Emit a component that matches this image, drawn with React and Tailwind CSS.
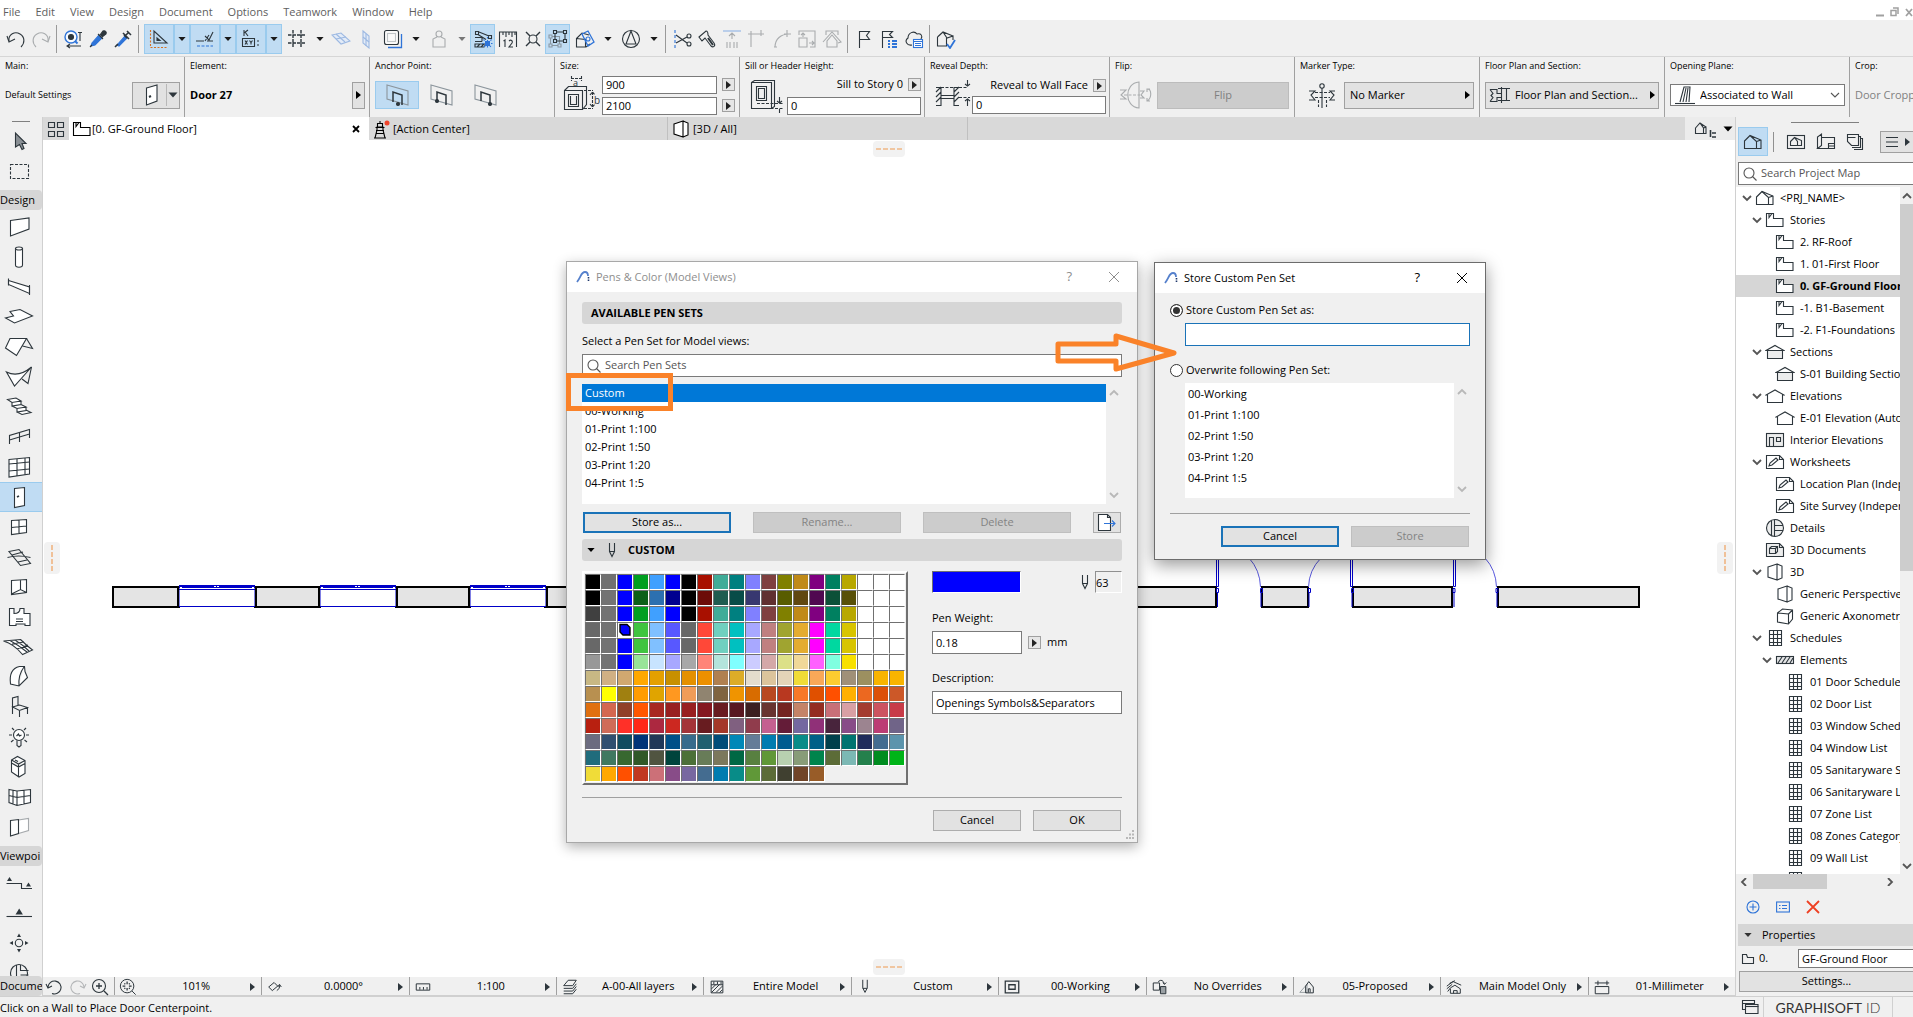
import React, { useState } from 'react';

const Svg = ({ w = 20, h = 20, className = '', children }) => (
  <svg
    width={w}
    height={h}
    viewBox={`0 0 ${w} ${h}`}
    fill="none"
    stroke="currentColor"
    strokeWidth="1.1"
    className={`shrink-0 ${className}`}
    aria-hidden="true"
  >
    {children}
  </svg>
);

const BLUE = '#2f74d8';

/* small shared glyphs */
const Down = ({ className = '' }) => (
  <Svg w={10} h={6} className={className}><path d="M0.5 0.5h9L5 5.5z" fill="currentColor" stroke="none" /></Svg>
);
const Right = ({ className = '' }) => (
  <Svg w={5} h={8} className={className}><path d="M0 0l5 4-5 4z" fill="currentColor" stroke="none" /></Svg>
);
const Chevron = ({ dir = 'down', className = '' }) => {
  const paths = { down: 'M1 2l4 4 4-4', up: 'M1 6l4-4 4 4', left: 'M7 0L3 4l4 4', right: 'M3 0l4 4-4 4' };
  return <Svg w={10} h={8} className={className}><path d={paths[dir]} strokeWidth="1.8" /></Svg>;
};
const Lens = ({ className = '' }) => (
  <Svg w={14} h={14} className={className}><circle cx="6" cy="6" r="5" /><path d="M9.5 9.5l4 4" /></Svg>
);
const Pen = () => (
  <Svg w={8} h={16} className="text-[#2d363c]"><path d="M1.5 1v8.5l2.5 5 2.5-5V1M1.5 9.500h5" /></Svg>
);

/* top toolbar */
const top = {
  undo: <><path d="M3 12C2 5 9 2 14 5s5 9 1 13" /><path d="M1 7l2 6 6-3" /></>,
  redo: <><path d="M17 12C18 5 11 2 6 5s-5 9-1 13" /><path d="M19 7l-2 6-6-3" /></>,
  find: <><circle cx="8" cy="8" r="6" stroke={BLUE} strokeWidth="1.4" fill="#f7fafe" /><circle cx="8" cy="8" r="2.5" fill="#2d363c" /><path d="M12 12l2.500 2.500" stroke={BLUE} strokeWidth="2" /><path d="M15 3.500h4M17 3v9M5 17h13M7 15l-3 2 3 2" /></>,
  pick: <><path d="M3 17l1-3 7-8 3 3-7 7z" fill={BLUE} stroke={BLUE} /><path d="M10 5l5 5M12 6l3-4c2-1 4 1 3 3l-4 3" fill="#2d363c" /><path d="M2 18l2-2" /></>,
  inject: <><path d="M4 16l8-9 2 2-8 8z" fill={BLUE} stroke={BLUE} /><path d="M10 4l6 6M12 7l4-4M14 2l4 4M11 6l3 3M2 18l3-3" strokeWidth="1.6" /></>,
  guide: <><path d="M5 2v12h13z" /><path d="M8 9v2.500h3z" /><path d="M1.500 1v17.500H19" stroke="#d87020" strokeDasharray="2 1.5" /></>,
  snap: <><path d="M1 12h8M12 12h6M10 7l4 4 4-8M10 12l4-6" /><path d="M2 17h16" stroke={BLUE} strokeDasharray="3 1.5" /></>,
  coord: <><path d="M3 1v6M3 4l4-3M4 3l3 4M1.500 9.500h12v8h-12z" /><path d="M4 11.500l2.500 4M6.500 11.500l-2.500 4M8.500 11.500l1.500 2 1.500-2M10 13.500v2M16 12h2M16 16h2" /></>,
  grid: <path d="M6 1v18M14 1v18M1 6h18M1 14h18" strokeWidth="1.4" strokeDasharray="3.5 1" />,
  planeH: <><path d="M1 6l9-2 9 8-9 3z" fill="#e3ebf7" stroke="#9db9e2" /><path d="M5 5l9 8M5 10l10-2" stroke="#9db9e2" /></>,
  planeV: <><path d="M7 2l6 5v12l-6-5z" fill="#e3ebf7" stroke="#9db9e2" /><path d="M10 5v12M7 8l6 5" stroke="#9db9e2" /></>,
  copy: <><path d="M5 18.500h13.500V5" stroke={BLUE} strokeWidth="1.3" /><rect x="1.5" y="1.5" width="14" height="14" rx="2" fill="#fafafa" /><rect x="4.5" y="4.5" width="8" height="8" stroke="#c0c5c8" /></>,
  weight: <><circle cx="10" cy="5" r="3" /><path d="M8 8l-4 2v8h12v-8l-4-2" /></>,
  trace: <><path d="M2.500 2.500h3v3h-3zM15.500 6.500h3v3h-3zM6 3l10 4M5 5.500l8 5M2 8.500h7M2 12.500h7M9 8.500v4M2 18h9l2-3H2zM4 18l3-3M8 18l3-3" /><rect x="12" y="12" width="5" height="5" fill={BLUE} stroke="none" /><path d="M14.500 8v12M9 14.500h11M10.500 10.500l8 8M18.500 10.500l-8 8" stroke={BLUE} strokeDasharray="1.5 1.5" /></>,
  ruler: <><path d="M1.500 18V3h17v15M5 3v3M8 3v5M11 3v3M14 3v5M17 3v3" /><path d="M5.500 12l1.500-1v7M11 12c2-2 4 0 3 2l-3 4h4" /></>,
  cross: <><circle cx="10" cy="10" r="4" /><path d="M3 3l4 4M17 3l-4 4M3 17l4-4M17 17l-4-4" strokeWidth="1.4" /></>,
  group: <><path d="M2.500 7.500h9v9h-9z" stroke="#8a98a3" /><path d="M1 6h3v3H1zM1 15h3v3H1zM10 15h3v3h-3z" stroke="#8a98a3" fill="#c0dcf3" /><path d="M7 3h10v9H7z" /><path d="M5.500 1.500h3v3h-3zM15.500 1.500h3v3h-3zM5.500 10.500h3v3h-3zM15.500 10.500h3v3h-3z" fill="#c0dcf3" /></>,
  box: <><path d="M1.500 9.500L7 4l7 2M1.500 9.500V18h9V10.500zM11 18l4-3" /><path d="M7 5l6-3 6 11-6 4z" stroke={BLUE} strokeWidth="1.3" /><circle cx="13" cy="10" r="2" stroke={BLUE} /></>,
  north: <><circle cx="10" cy="10" r="8.5" /><path d="M10 2L5 15h10z" /></>,
  scissors: <><path d="M3 1v18" stroke={BLUE} strokeDasharray="3 2" /><path d="M4 6l11 8M4 14l11-6" /><circle cx="17" cy="7" r="2" /><circle cx="17" cy="15" r="2" /></>,
  axe: <><path d="M2 8l7-6c2 0 2 2 2 4l6 8c2 3-1 5-3 3L8 9l-3 3z" /><path d="M11 9l5 7" strokeWidth="2" /></>,
  adjust: <><path d="M1 2h18" stroke="#8fb2e6" /><path d="M10 10V4M7 7l3-3 3 3M5 19v-6M8 19v-6M12 19v-6M15 19v-6" /></>,
  corner: <path d="M4 18V5h13M1 5h6M14 1v6M4 2v6" />,
  fillet: <path d="M3 18C3 10 9 5 17 5M12 5h7M15 1v7M2 18h3" />,
  resize: <path d="M2 9h8v9H2zM2 6V2h16v16h-5M6 8V4M4 6l2-2 2 2M12 14h5M15 12l2 2-2 2" />,
  house: <><path d="M4 6V2h12v4" /><path d="M5 18v-6l5-6 5 6v6zM1 13l9-10 9 10-3 1" /></>,
  flag: <path d="M5.500 19V2.500h10l-3 4 3 4h-10" />,
  flagList: <><path d="M3.500 19V2.500h10l-3 3 3 3h-10" /><path d="M9 12h2M9 15h2M9 18h2M13 12h5M13 15h5M13 18h5" stroke={BLUE} strokeWidth="1.8" /></>,
  cloud: <><path d="M8 16c-5 1-8-4-4-7 0-5 6-8 9-4 4-1 6 2 4 5" /><rect x="9.5" y="10.5" width="9" height="8" fill="#fff" stroke={BLUE} /><path d="M9 12.500h10M11 14.500h6M11 16.500h6" stroke={BLUE} /></>,
  check: <><path d="M1.500 8L7 3l10 4M1.500 8v9h9V9M7 3l4 6 6-2v4" /><path d="M11 15l3 4 5-8" stroke={BLUE} strokeWidth="1.8" /></>,
};

/* toolbox, each drawn in a 38x30 box */
const tools = [
  ['Wall', <path d="M10.500 8.500L29 6v11l-18.500 7z" fill="#fff" />],
  ['Column', <><path d="M15.500 6v17c0 3 7 3 7 0V6" fill="#fff" /><ellipse cx="19" cy="6.5" rx="3.5" ry="1.5" fill="#fff" /></>],
  ['Beam', <><path d="M8.500 8.500l21 6.500v6.500l-21-9z" fill="#fff" /><path d="M8.500 6.500v7M29.500 13v10" /></>],
  ['Slab', <path d="M10 9.500l10-2 12.500 6.500-18 7-9-5 8-2z" fill="#fff" />],
  ['Roof', <><path d="M10 6.500h16.500l-10 17-11-7.500z" fill="#fff" /><path d="M26.500 6.500l6 10-10-2.500" /></>],
  ['Shell', <><path d="M6.500 10q12 6 25-5L14.500 24z" fill="#fff" /><path d="M31.500 5L28 21.500 22 17" /></>],
  ['Stair', <path d="M7.500 7.500L16 6l5 3-9 1.500zM12 10.500v3.500l9-1.500V9M12 14l5 2.500 9-1.500-5-2.500M17 16.500V20l9-1.500V15M17 20l5 2.500 9-2-5-2.500" fill="#fff" />],
  ['Railing', <path d="M9.500 22V13.500l20-6V16M19.500 10.500V20M9.500 18l20-6" />],
  ['Curtain Wall', <><path d="M9 7.500l20.500-2v16.500L9 25z" fill="#fff" /><path d="M9 12l20.500-2M9 19l20.500-2M17 7v17M25 6v16.500" /></>],
  ['Door', <><path d="M14.500 6.500l10-1v18l-10 2z" fill="#fff" /><path d="M17 15l2-1" strokeWidth="1.8" /></>],
  ['Window', <path d="M11.500 8.500l15-1v13l-15 2zM19 8v13.500M11.500 15.500l15-1.500" fill="#fff" />],
  ['Skylight', <path d="M9 9.500l10-2 11.500 14-10 2zM7.500 15.500q11-3 23 0M12 13l11-3M18 20l9-2" />],
  ['Opening', <path d="M11.500 8.500l15-1v13l-15 2zM20.500 8v9.500M11.500 22l9-4.500 6 3" fill="#fff" />],
  ['Zone', <><path d="M9.500 6.500h4.500v5q6 0 6-5h4v5h6v12h-5V22h-9v1.500H9.500z" fill="#fff" /><path d="M16 17h7M16 19.500h7" /></>],
  ['Mesh', <path d="M3.500 9l17-1.500q6 6 12 10.500l-10 4.500Q14 12 3.500 9zM10 8.500q9 5 17 11.500M15 8q8 5 14 11M12 12l12-2M17 17l11-4" fill="#fff" />],
  ['Morph', <path d="M10.500 22q-2-15 9-17.500h5l.5 5 2.500 6-8.500 8.500zM24 5q-6 8-5 19" fill="#fff" />],
  ['Object', <path d="M12.500 15V6l5.500-1.500V13M12.500 15l7-2 8 2.500-8 3zM12.500 15v7M19.500 18v7M27.500 15.500V22" />],
  ['Lamp', <><circle cx="19" cy="13" r="5.5" fill="#fff" /><path d="M17 18.500v5l2 1.500 2-1.500v-5M16.500 14l2-2 1 2 2-1M9 13h3M26 13h3M12 6l2 2M26 6l-2 2M11 20l2.500-2M27 20l-2.500-2" /></>],
  ['Equipment', <path d="M11.500 8l6-3.500 7.500 4v13L19 25l-7.500-5zM11.500 8l7 4 6.500-3.500M18.500 12v13M11.500 11l7 4 6.500-3.500M15 8l3 1.500" fill="#fff" />],
  ['Wall Panel', <path d="M9 7.500l8 1.500 13.500-1.500v13L17 23.500 9 20.500zM17 9v14.500M9 13.500l8 2 13.500-2M13 8v14M24 8v14" fill="#fff" />],
  ['Wall End', <><path d="M18.500 8l10-1.500v12l-10 3" fill="#fff" stroke="#a5a9ac" /><path d="M10.500 8.500l8-1v14l-8 2.500z" fill="#fff" /></>],
];
const viewTools = [
  ['Section', <><path d="M6.500 15.500h15v5h10.500" /><path d="M7 13l2.500-4 2.500 4zM26 18.500l2.500-4 2.500 4z" fill="currentColor" stroke="none" /></>],
  ['Elevation', <><path d="M6.500 18.500H32" /><path d="M15.500 16.500l3.700-6 3.700 6z" fill="currentColor" stroke="none" /></>],
  ['Interior Elevation', <><circle cx="19" cy="15" r="3.7" /><path d="M17 9l2-3.500L21 9zM17 21l2 3.500 2-3.500zM13 13l-3.500 2 3.500 2zM25 13l3.500 2-3.500 2z" fill="currentColor" stroke="none" /></>],
  ['Detail', <><circle cx="19" cy="15" r="8.5" /><path d="M16.500 7v17M20.500 7v5.500h8M20.500 17h8" /></>],
];

/* navigator tree icons, 20x20 */
const tree = {
  project: <><path d="M1.500 9L7 3.500 18 8v8.500H1.500z" fill="#fff" /><path d="M7 3.500l6.500 6v7M13.500 9.500L18 8" /></>,
  story: <><path d="M1.500 3.500h7v5h9.500v8H1.500z" fill="#fff" /><path d="M4 3.500v4l3-4" /></>,
  section: <><path d="M2.500 8.500h15v8h-15z" fill="#eceded" /><path d="M1 8.500l9-5 9 5z" fill="#fff" /></>,
  elevation: <path d="M2.500 16.500V9L1 9l9-5 9 5h-1.500v7.500z" fill="#fff" />,
  interior: <><rect x="1.5" y="3.5" width="17" height="13" fill="#eceded" /><path d="M4.500 16V7.500h4V16M11.500 7.500h4v4h-4z" /></>,
  sheet: <><path d="M1.500 3.500h13l4 4v9h-17z" fill="#fff" /><path d="M14.500 3.500v4h4M4 14l1-3 6-5 2 2-6 5z" /></>,
  detail: <><circle cx="10" cy="10" r="8.5" fill="#eceded" /><path d="M6.500 2.500v15M9.500 2v16M9.500 7.500h8.500M9.500 12.500h8.500" /></>,
  doc3d: <><path d="M1.500 3.500h13l4 4v9h-17z" fill="#eceded" /><path d="M14.500 3.500v4h4M4.500 8.500h6v5h-6zM4.500 8.500l2-2h6v5l-2 2M10.500 8.500l2-2" /></>,
  persp: <path d="M3 5l9-3v16l-9-3zM12 2l5 2v12l-5 2" fill="#fff" />,
  axon: <path d="M2.500 7l5-4 10 1v9l-4 5-11-2zM2.500 7l11 1v10M13.500 8l4-4" fill="#fff" />,
  table: <path d="M4.500 2.500h12v15h-12zM4.500 6.500h12M4.500 10.500h12M4.500 14.500h12M8.500 2.500v15M12.500 2.500v15" fill="#fff" />,
  elements: <><rect x="1.5" y="6.5" width="17" height="7" fill="#e4e5e6" /><path d="M3 13l4-6M7 13l4-6M11 13l4-6M15 13l3-5" /></>,
};

const nodes = [
  [0, 'project', '<PRJ_NAME>', true],
  [1, 'story', 'Stories', true],
  [2, 'story', '2. RF-Roof'],
  [2, 'story', '1. 01-First Floor'],
  [2, 'story', '0. GF-Ground Floor'],
  [2, 'story', '-1. B1-Basement'],
  [2, 'story', '-2. F1-Foundations'],
  [1, 'section', 'Sections', true],
  [2, 'section', 'S-01 Building Section'],
  [1, 'elevation', 'Elevations', true],
  [2, 'elevation', 'E-01 Elevation (Auto)'],
  [1, 'interior', 'Interior Elevations'],
  [1, 'sheet', 'Worksheets', true],
  [2, 'sheet', 'Location Plan (Independent)'],
  [2, 'sheet', 'Site Survey (Independent)'],
  [1, 'detail', 'Details'],
  [1, 'doc3d', '3D Documents'],
  [1, 'persp', '3D', true],
  [2, 'persp', 'Generic Perspective'],
  [2, 'axon', 'Generic Axonometry'],
  [1, 'table', 'Schedules', true],
  [2, 'elements', 'Elements', true],
  [3, 'table', '01 Door Schedule'],
  [3, 'table', '02 Door List'],
  [3, 'table', '03 Window Schedule'],
  [3, 'table', '04 Window List'],
  [3, 'table', '05 Sanitaryware Schedule'],
  [3, 'table', '06 Sanitaryware List'],
  [3, 'table', '07 Zone List'],
  [3, 'table', '08 Zones Category'],
  [3, 'table', '09 Wall List'],
  [3, 'table', ''],
];
const indent = ['pl-[3px]', 'pl-[13px]', 'pl-[23px]', 'pl-[33px]'];

const penRows = [
  '000000 707070 0000ff 009f20 40a0ff 0000ff 000000 a81000 40ac98 008080 8080ff 804040 808000 c08a18 800080 008060 b8a800 ffffff ffffff ffffff',
  '000000 737373 0000ff 0c6018 2c70b0 000090 000000 6c0c08 205c50 084c48 383870 603030 585c00 604810 500850 0c5038 585008 ffffff ffffff ffffff',
  '404040 737373 0000ff 009f20 40a0ff 0000ff 000000 a81000 40ac98 008080 8080ff 804040 808000 c08a18 800080 008060 b8a800 ffffff ffffff ffffff',
  '686868 737373 0000ff 40c440 80c0ff 5858ff 686868 ff4838 70d0c0 00c0c0 a8a8ff c08080 a0a430 e4ac30 ff00ff 00d8a0 d8c400 ffffff ffffff ffffff',
  '686868 737373 0000ff 40c440 80c0ff 5858ff 686868 ff4838 70d0c0 00c0c0 a8a8ff c08080 a0a430 e4ac30 ff00ff 00d8a0 d8c400 ffffff ffffff ffffff',
  '989898 737373 0000ff 98e498 c8e4ff a8a8ff a8a8a8 ff8478 b4e4dc 80ffff ccccff d4a8a8 dce088 f0d898 ff60ff 80ffe0 f8e000 ffffff ffffff ffffff',
  'c8b884 d0b084 d0a870 ffa800 e4a000 c89000 e49000 ec9000 b08050 dcac28 e4dccc dcc49c e4d4b8 f0dc38 f8a858 fccc30 a09078 9c9060 f8b400 f8b400',
  'b89050 ffff00 a08010 ff9c00 e0a400 ff9820 f09c58 908470 806440 f09400 d86c00 b84820 b83820 f87828 e05000 ff5000 ffb000 ec6820 dc5008 cc5828',
  'e07010 d46850 904028 ff5800 a82820 982020 982020 841820 681c20 581820 3c2020 683430 742420 c48468 942c20 c87078 d8a0a4 a43c30 cc5460 c83c48',
  'b82010 d06c58 ff3028 ff2818 ac2840 cc2820 a43438 681c20 a43828 806080 903c4c c46090 641c38 7468a0 903078 48243c 884c88 9c8490 bc3c74 706488',
  '6c6c80 305070 104c60 003478 203858 005088 386c8c 206070 004c78 0088b8 647c98 007cb0 005c90 088c88 006088 00404c 007470 202c5c 446c90 5c94ac',
  '206c7c 407860 386830 305828 505440 00443c 4c7038 687c58 7c785c 006844 588040 609838 b8d0b0 889c78 00844c 5c6c38 7cb8b4 24804c 008c20 00b418',
  'f0dc38 ffa800 ff5000 c03820 cc7078 884c88 7868a0 446c90 007cb0 088c88 609838 5c6c38 404030 704428 985c28',
];
const pens = penRows.join(' ').split(' ');

const penSets = ['00-Working', '01-Print 1:100', '02-Print 1:50', '03-Print 1:20', '04-Print 1:5'];

const T = ({ icon, wide, on, dim }) => (
  <button
    aria-label={icon}
    className={`flex h-[30px] shrink-0 items-center justify-center ${wide ? 'w-[30px]' : 'w-[25px]'} ${on ? 'border border-[#9acbee] bg-[#c0dcf3]' : ''} ${dim ? 'text-[#a9acae]' : 'text-[#2d363c]'}`}
  >
    <Svg>{top[icon]}</Svg>
  </button>
);
const Drop = ({ on, dim }) => (
  <button aria-label="More" className={`flex h-[30px] w-4 shrink-0 items-center justify-center ${on ? 'border border-[#9acbee] bg-[#c0dcf3]' : ''} ${dim ? 'text-[#777]' : 'text-[#1a1a1a]'}`}>
    <Down className="w-2" />
  </button>
);
const Sep = () => <div className="mx-[3px] h-[28px] w-px shrink-0 bg-[#9a9a9a]" />;

const Toolbar = () => (
  <div className="flex h-[37px] shrink-0 items-center border-b border-[#d6d6d6] bg-[#f0f0f0] pt-px pl-[3px]">
    <T icon="undo" /><T icon="redo" dim />
    <Sep />
    <T icon="find" /><T icon="pick" /><T icon="inject" />
    <Sep />
    <div className="ml-0.5 flex">
      <T icon="guide" wide on /><Drop on />
      <T icon="snap" wide on /><Drop on />
      <T icon="coord" wide on /><Drop on />
    </div>
    <T icon="grid" wide /><Drop />
    <T icon="planeH" /><T icon="planeV" />
    <T icon="copy" wide /><Drop />
    <T icon="weight" wide dim /><Drop dim />
    <T icon="trace" on /><T icon="ruler" /><T icon="cross" /><T icon="group" on />
    <T icon="box" wide /><Drop />
    <T icon="north" wide /><Drop />
    <Sep />
    <T icon="scissors" /><T icon="axe" />
    <T icon="adjust" dim /><T icon="corner" dim /><T icon="fillet" dim /><T icon="resize" dim /><T icon="house" dim />
    <Sep />
    <T icon="flag" /><T icon="flagList" /><T icon="cloud" />
    <Sep />
    <T icon="check" />
  </div>
);

const Section = ({ label, last, children }) => (
  <div className={`flex flex-col py-0.5 ${last ? 'min-w-0 flex-1 overflow-hidden' : 'w-[185px] shrink-0 border-r border-[#a0a0a0]'}`}>
    <div className="h-4 shrink-0 pl-[5px] text-[9px] leading-[14px] text-black">{label}</div>
    <div className="flex h-10 items-center">{children}</div>
  </div>
);
const MiniBtn = () => (
  <button aria-label="Options" className="flex h-[13px] w-[13px] shrink-0 items-center justify-center border border-[#a0a0a0] bg-[#e6e6e6] text-[#222]"><Right /></button>
);
const field = 'min-w-0 border border-[#7a7a7a] bg-white pl-[3px] text-[11px] outline-none';
const anchors = [
  <><path d="M3 2l21 6v14L3 16z" stroke="#8b959c" /><path d="M9 19V9l9 3v10" strokeWidth="1.5" /><circle cx="14" cy="21" r="1.5" fill="currentColor" /></>,
  <><path d="M3 2l21 6v14L3 16z" stroke="#8b959c" /><path d="M9 18V9l9 3v10" strokeWidth="1.5" /><circle cx="9" cy="18" r="1.5" fill="currentColor" /></>,
  <><path d="M3 2l21 6v14L3 16z" stroke="#8b959c" /><path d="M9 18V9l9 3v8" strokeWidth="1.5" /><circle cx="18" cy="21" r="1.5" fill="currentColor" /></>,
];

const InfoBar = () => (
  <div className="flex h-[60px] shrink-0 overflow-hidden bg-[#f0f0f0]">
    <Section label="Main:">
      <span className="flex-1 pl-[5px] text-[9px]">Default Settings</span>
      <button aria-label="Default Settings" className="mr-1 flex h-[27px] w-[48px] items-center border border-[#a0a0a0] bg-[#e2e2e2] pl-3 text-[#2d363c]">
        <Svg w={13} h={22}><path d="M1.500 4L12 1v16L1.500 21z" fill="#fff" /><path d="M4 13l2-1" strokeWidth="2" /></Svg>
        <span className="ml-2 flex h-[22px] items-center border-l border-[#b8b8b8] pl-px"><Down /></span>
      </button>
    </Section>
    <Section label="Element:">
      <span className="flex-1 pl-[5px] text-[11px] font-bold">Door 27</span>
      <button aria-label="Choose element" className="mr-1 flex h-[27px] w-[13px] items-center justify-center border border-[#a0a0a0] bg-[#e2e2e2]"><Right /></button>
    </Section>
    <Section label="Anchor Point:">
      {anchors.map((a, i) => (
        <button key={i} aria-label={`Anchor ${i + 1}`} className={`flex h-7 w-11 items-center justify-center text-[#2d363c] ${i === 0 ? 'ml-[5px] border border-[#9acbee] bg-[#c0dcf3]' : ''}`}>
          <Svg w={27} h={25}>{a}</Svg>
        </button>
      ))}
    </Section>
    <Section label="Size:">
      <Svg w={38} h={40} className="ml-[7px] text-[#2d363c]">
        <path d="M2.500 15.500h18v19h-18zM2.500 15.500l4-4h18v18l-4 5M6.500 19.500h10v12h-10zM8.500 21v8.500h6V21" />
        <path d="M9 3.500h10M9.500 1v5M19.500 1v5M30.500 17v15M28 20l2.500-3 2.500 3M28 29l2.500 3 2.500-3M22 15.500h9M22 33.500h9" strokeDasharray="3 1" />
        <text x="11" y="11" fontSize="9" fill="currentColor" stroke="none">a</text>
        <text x="32" y="29" fontSize="10" fill="currentColor" stroke="none">b</text>
      </Svg>
      <div className="mr-1 ml-0.5 flex min-w-0 flex-1 flex-col gap-[3px]">
        <div className="flex items-center gap-[5px]"><input aria-label="Width" defaultValue="900" className={`${field} h-[18px] w-0 flex-1`} /><MiniBtn /></div>
        <div className="flex items-center gap-[5px]"><input aria-label="Height" defaultValue="2100" className={`${field} h-[18px] w-0 flex-1`} /><MiniBtn /></div>
      </div>
    </Section>
    <Section label="Sill or Header Height:">
      <Svg w={38} h={36} className="ml-[9px] text-[#2d363c]">
        <path d="M2.500 5.500h20v26h-20zM2.500 5.500l3-2h20v26l-3 2M7.500 9.500h10v14h-10zM9.500 11.500h6v10h-6z" />
        <path d="M8 26.500h26M8 31.500h26" strokeDasharray="3 1.5" /><path d="M30.500 20v6M30.500 36v-4M28 24l2.500 2 2.500-2" />
      </Svg>
      <div className="mr-[3px] flex min-w-0 flex-1 flex-col gap-[3px]">
        <div className="flex h-[18px] items-center justify-end gap-[5px] text-[11px] whitespace-nowrap">Sill to Story 0<MiniBtn /></div>
        <input aria-label="Sill height" defaultValue="0" className={`${field} h-[18px] w-full`} />
      </div>
    </Section>
    <Section label="Reveal Depth:">
      <Svg w={38} h={36} className="ml-[9px] text-[#2d363c]">
        <path d="M2 10.500h5v18H2M25 10.500h-5v18h5M7 18.500h13M7 21.500h13M2 15l5-5M2 20l5-5M2 25l5-5M20 15l5-5M20 20l5-5M20 25l5-5" />
        <path d="M7 10.500h27M25 20.500h11" strokeDasharray="3 1.5" /><path d="M33.500 3v6M33.500 29v-7M31 7l2.500 2L36 7M31 24l2.500-2 2.500 2" />
      </Svg>
      <div className="mr-[3px] flex min-w-0 flex-1 flex-col gap-px">
        <div className="flex h-[18px] items-center justify-end gap-[5px] text-[11px] whitespace-nowrap">Reveal to Wall Face<MiniBtn /></div>
        <input aria-label="Reveal depth" defaultValue="0" className={`${field} h-[18px] w-full`} />
      </div>
    </Section>
    <Section label="Flip:">
      <Svg w={34} h={30} className="ml-[9px] text-[#a9acae]">
        <path d="M20 2C5 3 5 27 20 28zM1 10h6l-5 5 5 4H1M21 11h4l-3 4 3 3h-4M28 9c5 0 5 9 0 12M31 9h-3v3M28 18v3h3" />
        <path d="M5 15h16" strokeDasharray="3 1.5" />
      </Svg>
      <button disabled className="mr-[5px] ml-1 h-[27px] flex-1 border border-[#bcbcbc] bg-[#cccccc] text-[11px] text-[#808080]">Flip</button>
    </Section>
    <Section label="Marker Type:">
      <Svg w={30} h={30} className="ml-3 text-[#2d363c]">
        <circle cx="15" cy="6" r="2.2" /><path d="M15 8v20M2 11h6l-4 4 4 5H2M28 11h-5l4 4-4 5h5" /><path d="M8 12.500h15M8 17.500h15M11.500 20v7M19.500 20v7" strokeDasharray="3 1.5" />
      </Svg>
      <button className="mr-[5px] ml-[7px] flex h-[27px] flex-1 items-center justify-between border border-[#a0a0a0] bg-[#e2e2e2] pr-[3px] pl-[5px] text-[11px]">No Marker<Right /></button>
    </Section>
    <Section label="Floor Plan and Section:">
      <button className="mr-[5px] ml-[5px] flex h-[27px] flex-1 items-center border border-[#a0a0a0] bg-[#e2e2e2] px-[3px] text-[11px]">
        <Svg w={22} h={18} className="mr-1 text-[#2d363c]"><path d="M1 3.500h7v4h5M1 15.500h7v-4h5M1 3.500l3 4-2 2 2 2-3 4M12.500 1v16M9 2.500h12M9 14.500h12M17.500 3v11" /></Svg>
        <span className="flex-1 text-left">Floor Plan and Section...</span><Right />
      </button>
    </Section>
    <Section label="Opening Plane:">
      <label className="mr-1 ml-[5px] flex h-[22px] flex-1 items-center border border-[#7a7a7a] bg-white pr-1 pl-[3px]">
        <Svg w={22} h={20} className="text-[#2d363c]"><path d="M1 18.500h20" /><path d="M6 17l4-15h6l-1 15M9 17l3-14M12 17l2-14" /></Svg>
        <select aria-label="Opening Plane" className="min-w-0 flex-1 appearance-none bg-transparent pl-1 text-[11px] outline-none"><option>Associated to Wall</option></select>
        <Svg w={10} h={8} className="text-[#555]"><path d="M1 2l4 4 4-4" /></Svg>
      </label>
    </Section>
    <Section label="Crop:" last>
      <span className="pl-[5px] text-[11px] whitespace-nowrap text-[#808080]">Door Cropping</span>
    </Section>
  </div>
);

const Tool = ({ name, on, onClick, children }) => (
  <button aria-label={name} onClick={onClick} className={`flex h-[30px] w-full shrink-0 items-center text-[#2d363c] ${on ? 'border-y border-[#9acbee] bg-[#c0dcf3]' : ''}`}>
    <Svg w={38} h={30}>{children}</Svg>
  </button>
);
const ToolHead = ({ children }) => (
  <div className="h-5 shrink-0 overflow-hidden rounded-r bg-[#d6d6d6] text-[11px] leading-5 text-black">{children}</div>
);

const Toolbox = () => {
  const [active, setActive] = useState('Door');
  return (
    <aside className="flex w-[43px] shrink-0 flex-col overflow-hidden border-r border-[#d0d0d0] bg-[#f0f0f0]">
      <div className="flex min-h-0 flex-1 flex-col overflow-hidden">
        <div className="flex h-[9px] shrink-0 items-center justify-center"><div className="h-px w-[18px] bg-[#808080]" /></div>
        <Tool name="Arrow"><path d="M15.500 7v14l4-2.500 2.500 5 2-1-2-5h4z" fill="#8a9095" /></Tool>
        <Tool name="Marquee"><rect x="10.5" y="8.5" width="18" height="14" strokeDasharray="3 1.5" /></Tool>
        <div className="mt-1 mb-0.5"><ToolHead>Design</ToolHead></div>
        {tools.map(([name, art]) => (
          <Tool key={name} name={name} on={name === active} onClick={() => setActive(name)}>{art}</Tool>
        ))}
        <div className="mt-1 mb-0.5"><ToolHead>Viewpoi</ToolHead></div>
        {viewTools.map(([name, art]) => <Tool key={name} name={name}>{art}</Tool>)}
      </div>
      <ToolHead>Docume</ToolHead>
    </aside>
  );
};

const Tabs = () => (
  <div className="flex h-[23px] shrink-0 bg-[#d9d9d9] text-[11px]">
    <button aria-label="Overview" className="flex w-[26px] items-center justify-center text-[#2d363c]">
      <Svg w={18} h={16}><path d="M1.500 1.500h6v5h-6zM10.500 1.500h6v5h-6zM1.500 10.500h6v5h-6zM10.500 10.500h6v5h-6z" /></Svg>
    </button>
    <div className="flex w-[300px] items-center bg-white pt-px pl-[3px]">
      <Svg>{tree.story}</Svg>
      <span className="flex-1">[0. GF-Ground Floor]</span>
      <button aria-label="Close tab" className="mr-[9px]"><Svg w={8} h={8}><path d="M1 1l6 6M7 1L1 7" strokeWidth="1.8" /></Svg></button>
    </div>
    <button className="flex w-[299px] items-center border-r border-[#c0c0c0] pt-px pl-0.5">
      <Svg w={20} h={20}><path d="M6 8h6v3l2 8H4l2-8zM4.500 8.500h9M6.500 8V4.500h5V8M9 2v2M5 14.500h8M3 19h12M5 11.500h8" /><circle cx="16" cy="4" r="2.5" fill="#f0452c" stroke="none" /></Svg>
      <span className="pl-0.5">[Action Center]</span>
    </button>
    <button className="flex w-[300px] items-center border-r border-[#c0c0c0] pt-px pl-[3px]">
      <Svg w={20} h={20}>{tree.persp}</Svg><span className="pl-0.5">[3D / All]</span>
    </button>
    <div className="flex-1" />
    <button aria-label="Views" className="flex w-[50px] items-center justify-between bg-[#ececec] pr-0.5 pl-2">
      <Svg w={24} h={20} className="text-[#2d363c]"><path d="M2.500 9L7 4l6 4v6.500H2.500zM7 4l3.500 5v5.500M10.500 9l3-1" /><path d="M17.500 11v7M19 14h4M19 18h4" strokeWidth="1.6" /></Svg>
      <Down />
    </button>
  </div>
);

/* floor plan in the model area */
const walls = [[113, 66], [255, 65], [396, 74], [545, 40], [1100, 116], [1262, 46], [1353, 99], [1498, 141]];
const windows = [179, 320, 470];
const doors = [1217, 1351, 1454];
const Plan = () => (
  <svg className="absolute inset-0 h-full w-full" fill="none" aria-hidden="true">
    <g transform="translate(-43 -140)">
      {walls.map(([x, w]) => <rect key={x} x={x} y="587" width={w} height="20" fill="#e4e4e4" stroke="#000" strokeWidth="2" />)}
      {windows.map((x) => (
        <g key={x} stroke="#0000c8">
          <rect x={x} y="586.5" width="76" height="20" fill="#fff" />
          <path d={`M${x} 586.500h76`} strokeWidth="3" />
          <path d={`M${x} 589.500h76`} />
          <path d={`M${x + 35} 586.500h2m1 0h2M${x + 1} 587.500h2M${x + 73} 587.500h2`} stroke="#fff" />
          <path d={`M${x - 1} 586v22M${x + 77} 586v22`} stroke="#000" strokeWidth="2" />
        </g>
      ))}
      <g stroke="#0000c8">
        {doors.map((x) => <path key={x} d={`M${x - 0.5} 555v31.500h2V555`} />)}
        <path d="M1216.500 588.500h2v4h-2zM1217.500 592v15M1260.500 588.500h2v4h-2zM1261 592v15M1308.500 588.500h2v4h-2zM1309 592v15M1351.500 588.500h2v4h-2zM1352 592v15M1453 588.500h2v4h-2zM1454 592v15M1496 588.500h2v4h-2zM1497 592v15" />
        <path d="M1249 558Q1260 570 1260.500 587M1321 558Q1309 570 1308.500 587M1485 558Q1496 570 1496.500 587" stroke="#5a5ae0" />
      </g>
    </g>
  </svg>
);

const Marker = ({ vertical }) => (
  <div className={`flex items-center justify-center rounded-sm bg-[#f2f2f2] text-[#ee9a50] ${vertical ? 'h-8 w-4' : 'h-4 w-8'}`}>
    {vertical
      ? <Svg w={4} h={26}><path d="M2 0v26" strokeDasharray="5 2" /></Svg>
      : <Svg w={26} h={4}><path d="M0 2h26" strokeDasharray="5 2" /></Svg>}
  </div>
);

const Logo = () => (
  <Svg w={14} h={14}><path d="M1 12C5 7 5 2 9 2c2 0 3 1 3 4" stroke="#5580cc" strokeWidth="1.8" /><path d="M12.500 7v4" stroke="#20386b" strokeWidth="1.6" strokeDasharray="1.5 1" /></Svg>
);
const TitleBar = ({ title, dim }) => (
  <div className={`flex h-[30px] items-center bg-white pr-[17px] pl-[9px] text-[11px] ${dim ? 'text-[#8e8e8e]' : 'text-black'}`}>
    <Logo />
    <h2 className="flex-1 pl-[6px]">{title}</h2>
    <button aria-label="Help" className="mr-9 text-[13px]">?</button>
    <button aria-label="Close"><Svg w={12} h={12}><path d="M1 1l10 10M11 1L1 11" strokeWidth="1" /></Svg></button>
  </div>
);
const Btn = ({ children, primary, className = '', ...rest }) => (
  <button
    {...rest}
    className={`flex h-[21px] items-center justify-center text-[11px] ${primary ? 'border-2 border-[#1a73b8] bg-[#e2e2e2]' : 'border border-[#adadad] bg-[#e2e2e2] disabled:border-[#bfbfbf] disabled:bg-[#cccccc] disabled:text-[#838383]'} ${className}`}
  >
    {children}
  </button>
);
const ListScroll = () => (
  <div className="flex w-4 flex-col items-center justify-between py-[5px] text-[#b8b8b8]"><Chevron dir="up" /><Chevron /></div>
);

const PensDialog = () => {
  const [selected, setSelected] = useState('Custom');
  return (
    <section className="absolute top-[121px] left-[523px] w-[572px] border border-[#a8a8a8] bg-[#f0f0f0] text-[11px] shadow-[0_4px_12px_rgba(0,0,0,0.3)]">
      <TitleBar title="Pens & Color (Model Views)" dim />
      <div className="px-[15px] pt-[10px]">
        <h3 className="h-[22px] rounded-[3px] bg-[#d6d6d6] pl-[9px] leading-[22px] font-bold">AVAILABLE PEN SETS</h3>
        <label htmlFor="pen-search" className="mt-2 block h-[22px] leading-[18px]">Select a Pen Set for Model views:</label>
        <div className="flex h-[23px] items-center border border-[#7a7a7a] bg-white pl-1">
          <Lens className="text-[#555]" />
          <input id="pen-search" placeholder="Search Pen Sets" className="flex-1 bg-transparent pl-1 outline-none placeholder:text-[#555]" />
        </div>
        <div className="mt-[7px] flex h-[120px]">
          <ul role="listbox" aria-label="Pen sets" className="flex-1 bg-white">
            {['Custom', ...penSets].map((s) => (
              <li key={s} role="option" aria-selected={s === selected} onClick={() => setSelected(s)} className={`h-[18px] pl-[3px] leading-[18px] ${s === selected ? 'bg-[#0078d7] text-white' : ''}`}>{s}</li>
            ))}
          </ul>
          <ListScroll />
        </div>
        <div className="mt-2 flex justify-between px-px">
          <Btn primary className="w-[148px]">Store as...</Btn>
          <Btn disabled className="w-[148px]">Rename...</Btn>
          <Btn disabled className="w-[148px]">Delete</Btn>
          <Btn aria-label="Export" className="w-7 text-[#2d363c]">
            <Svg w={20} h={19}><path d="M1.500 1.500h9l3 3v13h-12z" fill="#fff" /><path d="M10.500 1.500v3h3" /><path d="M7 10.500h11M15 7.500l3 3-3 3" stroke={BLUE} /></Svg>
          </Btn>
        </div>
        <h3 className="mt-1.5 flex h-[22px] items-center rounded-[3px] bg-[#d6d6d6] pl-[5px] font-bold">
          <Down className="w-2" /><span className="mr-3 ml-[13px]"><Pen /></span>CUSTOM
        </h3>
        <div className="mt-[10px] flex">
          <div className="h-[214px] w-[326px] shrink-0 border-2 border-t-white border-r-[#707070] border-b-[#707070] border-l-white pt-px pl-px">
            <div className="grid grid-cols-20 content-start pr-px">
              {pens.map((c, i) => (
                <button key={i} aria-label={`Pen ${i + 1}`} className="h-4 w-4 border border-t-[#707070] border-r-white border-b-white border-l-[#707070]" style={{ backgroundColor: `#${c}` }}>
                  {i === 62 && (
                    <Svg w={14} h={14}><path d="M0 0h14v14H0z" fill="#fff" stroke="none" /><path d="M2 1.500h7l3 3V12H5L2 9z" fill="#0000ff" stroke="#000" strokeWidth="1.4" /></Svg>
                  )}
                </button>
              ))}
            </div>
          </div>
          <div className="ml-6 flex-1">
            <div className="flex h-[22px] items-center justify-between">
              <div className="h-[22px] w-[89px] border border-t-[#707070] border-r-white border-b-white border-l-[#707070] bg-[#0000ff]" />
              <div className="flex items-center gap-1.5">
                <Pen />
                <input aria-label="Pen number" defaultValue="63" className="h-[22px] w-[27px] border border-t-[#909090] border-r-white border-b-white border-l-[#909090] outline-none" />
              </div>
            </div>
            <label htmlFor="weight" className="mt-4 block h-[22px] leading-[18px]">Pen Weight:</label>
            <div className="flex items-center gap-1.5">
              <input id="weight" defaultValue="0.18" className={`${field} h-[23px] w-[90px]`} /><MiniBtn />mm
            </div>
            <label htmlFor="desc" className="mt-[15px] block h-[22px] leading-[18px]">Description:</label>
            <input id="desc" defaultValue="Openings Symbols&Separators" className={`${field} h-[23px] w-full`} />
          </div>
        </div>
        <div className="mt-3 h-px bg-[#a0a0a0]" />
        <div className="flex h-11 justify-end gap-3 pt-3 pr-px">
          <Btn className="w-[88px]">Cancel</Btn>
          <Btn className="w-[88px]">OK</Btn>
        </div>
      </div>
      <Svg w={10} h={10} className="absolute right-[2px] bottom-[2px] text-[#b8b8b8]"><path d="M7 1h2M4 4.500h2M7 4.500h2M1 8h2M4 8h2M7 8h2" strokeWidth="2" /></Svg>
    </section>
  );
};

const StoreDialog = () => {
  const [mode, setMode] = useState('store');
  const radio = 'h-[13px] w-[13px] appearance-none rounded-full border border-[#333] bg-white checked:bg-[#333] checked:shadow-[inset_0_0_0_2px_#fff]';
  return (
    <section className="absolute top-[122px] left-[1111px] w-[332px] border border-[#6c6c6c] bg-[#f0f0f0] text-[11px] shadow-[0_5px_16px_rgba(0,0,0,0.4)]">
      <TitleBar title="Store Custom Pen Set" />
      <div className="px-[15px] pt-2">
        <label className="flex h-[18px] items-center gap-[3px]"><input type="radio" name="mode" checked={mode === 'store'} onChange={() => setMode('store')} className={radio} />Store Custom Pen Set as:</label>
        <input aria-label="Pen set name" className="mt-1 ml-[15px] block h-[23px] w-[285px] border border-[#1a73b8] bg-white px-1 outline-none" />
        <label className="mt-[15px] flex h-[18px] items-center gap-[3px]"><input type="radio" name="mode" checked={mode === 'over'} onChange={() => setMode('over')} className={radio} />Overwrite following Pen Set:</label>
        <div className="mt-1 ml-[15px] flex h-[115px]">
          <ul className="flex-1 bg-white">
            {penSets.map((s) => <li key={s} className="h-[21px] pl-[3px] leading-[22px]">{s}</li>)}
          </ul>
          <ListScroll />
        </div>
        <div className="mt-[15px] h-px bg-[#a0a0a0]" />
        <div className="flex justify-end gap-3 pt-3 pr-px pb-3">
          <Btn primary className="w-[118px]">Cancel</Btn>
          <Btn disabled className="w-[118px]">Store</Btn>
        </div>
      </div>
    </section>
  );
};

const Canvas = () => (
  <main className="relative min-h-0 flex-1 overflow-hidden bg-white">
    <Plan />
    <div className="absolute top-px left-[830px]"><Marker /></div>
    <div className="absolute bottom-0.5 left-[830px]"><Marker /></div>
    <div className="absolute top-[402px] left-px"><Marker vertical /></div>
    <div className="absolute top-[402px] right-0.5"><Marker vertical /></div>
    <PensDialog />
    <StoreDialog />
    {/* callouts */}
    <div className="absolute top-[233px] left-[523px] h-[38px] w-[107px] border-5 border-[#fa8229]" />
    <svg className="absolute top-[190px] left-[1008px]" width="130" height="46" fill="none" aria-hidden="true">
      <path d="M7 14h58V6l58 17-58 16v-8H7z" stroke="#fa8229" strokeWidth="5" strokeLinejoin="round" />
    </svg>
  </main>
);

const quick = [
  ['101%', <><circle cx="9" cy="9" r="7.5" /><path d="M14.500 14.500l4 4" /><path d="M9 4v3M9 11v3M4 9h3M11 9h3M6 6l1 1M12 6l-1 1M6 12l1-1M12 12l-1-1" strokeWidth="1.4" /></>],
  ['0.0000°', <path d="M3 10l6-5 4 4-6 5zM12 14q4-2 3-6M13 10l2-3 2 3" />],
  ['1:100', <path d="M2.500 6.500h15v7h-15zM6.500 13v-3M10.500 13v-3M14.500 13v-3" />],
  ['A-00-All layers', <path d="M3 8.500l5-6h9l-4 6zM3 11.500h10l4-5M3 14.500h10l4-5M3 17.500h10l4-5" />],
  ['Entire Model', <path d="M3.500 3.500h13v13h-13zM3.500 7.500h13M4 12l5-5M4 16l9-9M9 16l7-7M13 16l3-3M6.500 4v3M10.500 4v3M14.500 4v3" />],
  ['Custom', <path d="M7.500 2v9l2.500 5 2.500-5V2M7.500 11.500h5" />],
  ['00-Working', <path d="M2.500 3.500h15v13h-15zM6.500 7.500h7v5h-7z" strokeWidth="1.4" />],
  ['No Overrides', <><path d="M2.500 5.500h7v8h-7zM8 4q5-4 7 3M13 5l2 2 2-2" /><path d="M10.500 9.500h6v8h-6z" fill="#9aa0a4" /></>],
  ['05-Proposed', <><path d="M2 16l8-9v9z" stroke="#9aa0a4" /><path d="M8.500 16.500V9L12 4l5 6v6.500zM11.500 16v-4h2v4" /></>],
  ['Main Model Only', <path d="M2 9l7-5 9 4M2 12l6-5M3 15l3-4 5-3 6 4v5H6v-5M9.500 17v-3h4v3M5 6l6-3" />],
  ['01-Millimeter', <path d="M2.500 9.500h15v8h-15zM2 5.500h16M5.500 3v5M15.500 3v5" />],
];
const QuickBar = () => (
  <div className="flex h-[19px] shrink-0 border-b border-[#d0d0d0] bg-[#f0f0f0] text-[11px] text-[#2d363c]">
    <div className="flex w-[71px] items-center gap-1 pt-px pl-0.5">
      <button aria-label="Previous view"><Svg w={19} h={18}><path d="M3 9a6.500 6.500 0 1 1 4 6.500M1 6l2 4 4-2" /></Svg></button>
      <button aria-label="Next view" className="text-[#b4b6b8]"><Svg w={19} h={18}><path d="M16 9a6.500 6.500 0 1 0-4 6.500M18 6l-2 4-4-2" /></Svg></button>
      <button aria-label="Zoom in"><Svg w={18} h={18}><circle cx="8" cy="8" r="6.5" /><path d="M13 13l4 4M5 8h6M8 5v6" strokeWidth="1.3" /></Svg></button>
    </div>
    {quick.map(([text, art]) => (
      <button key={text} className="flex min-w-0 flex-1 items-center border-l border-[#a0a0a0] pt-px pr-[6px] pl-[3px]">
        <Svg className="mr-1 h-[18px]">{art}</Svg>
        <span className="flex-1 text-center whitespace-nowrap text-black">{text}</span>
        <Right />
      </button>
    ))}
  </div>
);

const Navigator = () => (
  <aside className="flex w-[178px] shrink-0 flex-col overflow-hidden border-l border-[#d0d0d0] bg-[#f0f0f0] text-[11px]">
    <div className="flex h-[10px] shrink-0 items-center justify-center"><div className="h-px w-[68px] bg-[#808080]" /></div>
    <div className="flex h-[35px] shrink-0 items-start pl-0.5 text-[#2d363c]">
      <button aria-label="Project Map" className="flex h-[29px] w-[30px] items-center justify-center border border-[#9acbee] bg-[#c0dcf3]"><Svg><path d="M1.500 9L7 3.500 18 8v8.500H1.500zM7 3.500l6.500 6v7M13.500 9.500L18 8" /></Svg></button>
      <div className="mt-[5px] ml-[5px] h-5 w-px bg-[#909090]" />
      <div className="flex h-[29px] flex-1 items-center justify-between pr-[15px] pl-3">
        <button aria-label="View Map"><Svg><rect x="1.5" y="3.5" width="17" height="13" /><path d="M4.500 9.500l4-4 7 3v5h-11zM8.500 5.500l3 4v4" /></Svg></button>
        <button aria-label="Layout Book"><Svg><path d="M1.500 16.500V5l4-3v11.500l-4 3h17V5.500h-13M12.500 16.500v-5h6M12.500 14h6" /></Svg></button>
        <button aria-label="Publisher"><Svg><path d="M2.500 2.500h11v11h-7l-4-4zM2.500 5.500h8M14 4.500h1.500v11H7M16 6.500h1.500v11H9" /></Svg></button>
      </div>
      <button aria-label="Menu" className="mt-1 flex h-[22px] w-[33px] items-center justify-between border border-r-0 border-[#a0a0a0] bg-[#e2e2e2] pr-[3px] pl-1"><Svg w={14} h={12}><path d="M1 1.500h12M1 6h12M1 10.500h12" /></Svg><Right /></button>
    </div>
    <div className="ml-0.5 flex h-[23px] shrink-0 items-center border border-r-0 border-[#7a7a7a] bg-white pl-1">
      <Lens className="text-[#555]" />
      <input aria-label="Search Project Map" placeholder="Search Project Map" className="min-w-0 flex-1 pl-1 outline-none placeholder:text-[#555]" />
    </div>
    <div className="mt-0.5 flex min-h-0 flex-1">
      <ul className="min-w-0 flex-1 overflow-hidden bg-white">
        {nodes.map(([level, icon, text, open], i) => (
          <li key={i} className={`flex h-[22px] items-center whitespace-nowrap ${indent[level]} ${i === 4 ? 'bg-[#d6d6d6] font-bold' : ''}`}>
            <span className="flex w-4 shrink-0 justify-center text-[#555]">{open && <Chevron />}</span>
            <Svg className="mr-[5px] text-[#2d363c]">{tree[icon]}</Svg>
            {text}
          </li>
        ))}
      </ul>
      <div className="flex w-[13px] shrink-0 flex-col items-center text-[#555]">
        <div className="flex h-[17px] items-center"><Chevron dir="up" /></div>
        <div className="h-[367px] w-full bg-[#cdcdcd]" />
        <div className="mt-auto flex h-[17px] items-center"><Chevron /></div>
      </div>
    </div>
    <div className="flex h-[15px] shrink-0 items-center pr-[18px] pl-[3px] text-[#555]">
      <Chevron dir="left" />
      <div className="ml-1 h-[15px] w-[74px] bg-[#cdcdcd]" />
      <Chevron dir="right" className="ml-auto" />
    </div>
    <div className="flex h-[35px] shrink-0 items-center gap-4 pl-[10px]">
      <button aria-label="New"><Svg w={14} h={14}><circle cx="7" cy="7" r="6" stroke={BLUE} /><path d="M7 3.500v7M3.500 7h7" stroke={BLUE} /></Svg></button>
      <button aria-label="Settings list"><Svg w={14} h={12}><rect x="0.6" y="1" width="12.8" height="10" stroke={BLUE} /><path d="M3 4.500h1.500M3 7.500h1.500M6 4.500h5M6 7.500h5" stroke={BLUE} /></Svg></button>
      <button aria-label="Delete"><Svg w={14} h={14}><path d="M1 1l12 12M13 1L1 13" stroke="#ee4023" strokeWidth="1.8" /></Svg></button>
    </div>
    <h3 className="ml-0.5 flex h-[22px] shrink-0 items-center bg-[#d6d6d6] pl-[6px]"><Down className="w-2 text-[#333]" /><span className="pl-[10px]">Properties</span></h3>
    <div className="mt-[3px] flex h-[19px] shrink-0 items-center pl-[5px]">
      <Svg w={14} h={14} className="text-[#2d363c]"><path d="M1.500 2.500h4l1 3h6v6h-11z" /></Svg>
      <label htmlFor="story" className="w-[43px] pl-1">0.</label>
      <input id="story" defaultValue="GF-Ground Floor" className={`${field} h-[19px] flex-1 border-r-0`} />
    </div>
    <button className="mt-[3px] mb-1 ml-[3px] flex h-[21px] shrink-0 items-center justify-center border border-r-0 border-[#a0a0a0] bg-[#e2e2e2]">Settings...</button>
  </aside>
);

const menus = ['File', 'Edit', 'View', 'Design', 'Document', 'Options', 'Teamwork', 'Window', 'Help'];

const App = () => (
  <div className="flex h-screen flex-col overflow-hidden bg-[#f0f0f0] font-['Open_Sans','Noto_Sans',sans-serif] text-[11px] text-black">
    <header className="flex h-5 shrink-0 items-end justify-between bg-white pl-[3px]">
      <nav className="flex gap-[15px] leading-[16px] text-[#606060]">
        {menus.map((m) => <button key={m}>{m}</button>)}
      </nav>
      <div className="flex h-4 items-center gap-1.5 text-[#a0a0a0]">
        <Svg w={8} h={10}><path d="M0 8.500h8" strokeWidth="2" /></Svg>
        <Svg w={9} h={10}><path d="M1 3.500h5v5H1zM3 1h5v6" strokeWidth="1.5" /></Svg>
        <Svg w={8} h={10}><path d="M1 2l6 7M7 2L1 9" strokeWidth="1.8" /></Svg>
      </div>
    </header>
    <Toolbar />
    <InfoBar />
    <div className="flex min-h-0 flex-1">
      <Toolbox />
      <div className="flex min-w-0 flex-1 flex-col">
        <Tabs />
        <Canvas />
        <QuickBar />
      </div>
      <Navigator />
    </div>
    <footer className="flex h-[21px] shrink-0 items-center border-t border-[#d0d0d0] bg-[#f0f0f0]">
      <span className="flex-1 pt-0.5">Click on a Wall to Place Door Centerpoint.</span>
      <button aria-label="Windows" className="mr-1 text-[#2d363c]"><Svg w={18} h={16}><path d="M1.500 1.500h12v9h-12zM1.500 4.500h12" /><path d="M4.500 5.500H17v9H4.500z" fill="#f0f0f0" /><path d="M4.500 7.500h13" /></Svg></button>
      <div className="flex h-full w-[130px] items-center justify-center border-x border-[#d0d0d0] font-['Lato',sans-serif] text-[14px] text-[#333]">
        <span>GRAPHISOFT</span><span className="pl-1 font-light">ID</span>
      </div>
      <div className="w-5" />
    </footer>
  </div>
);

export default App;
